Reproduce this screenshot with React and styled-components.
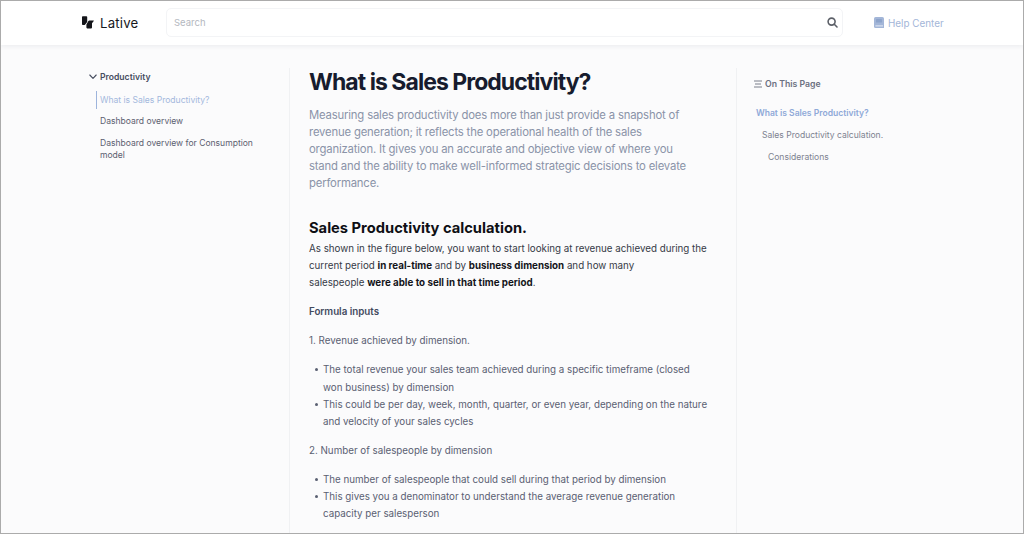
import React from 'react';
import styled, { createGlobalStyle } from 'styled-components';

const GlobalStyle = createGlobalStyle`
  html, body { margin: 0; padding: 0; height: 100%; }
  body { background: #fbfbfc; font-family: Inter, "Noto Sans", sans-serif; overflow: hidden; }
  * { box-sizing: border-box; }
`;

const Frame = styled.div`
  width: 1024px;
  height: 534px;
  border: 1px solid #ababab;
  overflow: hidden;
  background: #fbfbfc;
`;

const Header = styled.header`
  height: 44px;
  background: #fff;
  box-shadow: 0 1px 5px rgba(30, 40, 60, 0.08);
  display: flex;
  align-items: center;
  padding: 0 0 1px 80px;
`;

const Brand = styled.div`
  width: 85px;
  display: flex;
  align-items: center;
  gap: 6px;
  font-size: 13.2px;
  color: #16181d;
  letter-spacing: 0.2px;
`;

const SearchBox = styled.div`
  width: 677px;
  height: 29px;
  border: 1px solid #f3f4f6;
  border-radius: 5px;
  display: flex;
  align-items: center;
  justify-content: space-between;
  padding: 0 4px 0 7px;
  font-size: 9.5px;
  color: #b4b8c0;
`;

const HelpLink = styled.div`
  margin-left: 31px;
  display: flex;
  align-items: center;
  gap: 4px;
  font-size: 9.9px;
  color: #a3b6d8;
`;

const Body = styled.div`
  display: flex;
  padding: 23px 0 0 88px;
`;

const Sidebar = styled.nav`
  width: 200px;
  padding-top: 3px;
`;

const NavHead = styled.div`
  display: flex;
  align-items: center;
  gap: 3px;
  font-size: 8.6px;
  font-weight: 600;
  color: #474d5f;
  height: 12px;
`;

const NavList = styled.div`
  margin: 8px 0 0 7px;
  display: flex;
  flex-direction: column;
  gap: 4px;
`;

const NavItem = styled.div`
  padding: 2.5px 0 2.5px 3px;
  width: 170px;
  border-left: 1.5px solid ${p => (p.$active ? '#9db4dc' : 'transparent')};
  font-size: 8.55px;
  line-height: 12.5px;
  color: ${p => (p.$active ? '#a3b8dc' : '#5b6070')};
`;

const Main = styled.main`
  width: 448px;
  border-left: 1px solid #f0f1f3;
  border-right: 1px solid #f0f1f3;
  padding: 0 20px 0 19px;
  height: 470px;
`;

const Title = styled.h1`
  margin: 0;
  font-size: 23px;
  font-weight: 700;
  line-height: 29px;
  letter-spacing: -0.95px;
  color: #171c2e;
`;

const Lead = styled.p`
  margin: 10px 0 0;
  font-size: 11.3px;
  line-height: 17px;
  letter-spacing: -0.17px;
  color: #8a93a8;
`;

const SectionTitle = styled.h2`
  margin: 26px 0 0;
  font-size: 14.7px;
  font-weight: 700;
  line-height: 20px;
  color: #0e0f14;
`;

const Para = styled.p`
  margin: 2px 0 0;
  font-size: 9.78px;
  line-height: 17.1px;
  color: #363a46;
  strong { color: #14151a; font-weight: 700; }
`;

const SubHead = styled.p`
  margin: 12px 0 0;
  font-size: 9.78px;
  line-height: 17.1px;
  font-weight: 600;
  color: #434a5e;
`;

const Step = styled.p`
  margin: 12px 0 0;
  font-size: 9.78px;
  line-height: 17.1px;
  color: #5a6072;
`;

const Bullets = styled.ul`
  margin: 12px 0 0;
  padding: 0 0 0 14px;
  list-style: none;
  font-size: 9.78px;
  line-height: 17.1px;
  color: #5a6072;
`;

const Bullet = styled.li`
  position: relative;
  &::before {
    content: '';
    position: absolute;
    left: -8px;
    top: 7px;
    width: 3px;
    height: 3px;
    border-radius: 50%;
    background: #5a6072;
  }
`;

const Toc = styled.aside`
  padding: 9px 0 0 17px;
`;

const TocHead = styled.div`
  display: flex;
  align-items: center;
  gap: 3px;
  font-size: 8.7px;
  font-weight: 600;
  color: #6b7080;
  height: 14px;
`;

const TocLink = styled.div`
  margin: ${p => (p.$first ? '17px' : '11px')} 0 0 ${p => p.$indent * 6 + 2}px;
  font-size: 8.55px;
  line-height: 11px;
  font-weight: ${p => (p.$active ? 600 : 400)};
  color: ${p => (p.$active ? '#8fa9d8' : '#7d8290')};
`;

const LogoMark = () => (
  <svg width="13" height="13" viewBox="0 0 13 13">
    <path d="M1 1 Q1 .2 1.8 .2 H5.4 Q6.2 .2 6.2 1 V6 L4.2 8.4 Q3.8 9 3 9 H1.8 Q1 9 1 8.2 Z" fill="#14151a" />
    <path d="M7.4 5 Q7.7 4.4 8.4 4.4 H12.6 Q13 4.4 12.8 4.9 L11 7.2 V11.4 Q11 12.4 10 12.4 H6.2 Q5.4 12.4 5.4 11.6 V8.6 Z" fill="#14151a" />
  </svg>
);

const SearchIcon = () => (
  <svg width="11" height="11" viewBox="0 0 11 11" fill="none" stroke="#5c6068" strokeWidth="1.6" strokeLinecap="round">
    <circle cx="4.6" cy="4.6" r="3.5" />
    <path d="M7.3 7.3 L10 10" />
  </svg>
);

const BookIcon = () => (
  <svg width="10" height="11" viewBox="0 0 10 11">
    <path d="M1.6 0 H8.4 Q10 0 10 1.6 V11 H1.6 Q0 11 0 9.4 V1.6 Q0 0 1.6 0 Z" fill="#a3b6d8" />
    <rect x="2" y="2" width="6" height="3.6" rx="0.4" fill="#8da4cb" />
    <rect x="1.4" y="8.4" width="7.6" height="1" fill="#e4eaf5" />
  </svg>
);

const Chevron = () => (
  <svg width="8" height="6" viewBox="0 0 8 6" fill="none" stroke="#474d5f" strokeWidth="1.1" strokeLinecap="round" strokeLinejoin="round">
    <path d="M.8 1 L4 4.4 L7.2 1" />
  </svg>
);

const ListIcon = () => (
  <svg width="8" height="8" viewBox="0 0 8 8" fill="none" stroke="#6b7080" strokeWidth="0.9">
    <path d="M0 1 H8 M1 4 H7 M0 7 H8" />
  </svg>
);

export default function App() {
  return (
    <Frame>
      <GlobalStyle />
      <Header>
        <Brand><LogoMark />Lative</Brand>
        <SearchBox>Search<SearchIcon /></SearchBox>
        <HelpLink><BookIcon />Help Center</HelpLink>
      </Header>
      <Body>
        <Sidebar>
          <NavHead><Chevron />Productivity</NavHead>
          <NavList>
            <NavItem $active>What is Sales Productivity?</NavItem>
            <NavItem>Dashboard overview</NavItem>
            <NavItem>Dashboard overview for Consumption model</NavItem>
          </NavList>
        </Sidebar>
        <Main>
          <Title>What is Sales Productivity?</Title>
          <Lead>
            Measuring sales productivity does more than just provide a snapshot of<br />
            revenue generation; it reflects the operational health of the sales<br />
            organization. It gives you an accurate and objective view of where you<br />
            stand and the ability to make well-informed strategic decisions to elevate<br />
            performance.
          </Lead>
          <SectionTitle>Sales Productivity calculation.</SectionTitle>
          <Para>
            As shown in the figure below, you want to start looking at revenue achieved during the<br />
            current period <strong>in real-time</strong> and by <strong>business dimension</strong> and how many<br />
            salespeople <strong>were able to sell in that time period</strong>.
          </Para>
          <SubHead>Formula inputs</SubHead>
          <Step>1. Revenue achieved by dimension.</Step>
          <Bullets>
            <Bullet>The total revenue your sales team achieved during a specific timeframe (closed<br />won business) by dimension</Bullet>
            <Bullet>This could be per day, week, month, quarter, or even year, depending on the nature<br />and velocity of your sales cycles</Bullet>
          </Bullets>
          <Step>2. Number of salespeople by dimension</Step>
          <Bullets>
            <Bullet>The number of salespeople that could sell during that period by dimension</Bullet>
            <Bullet>This gives you a denominator to understand the average revenue generation<br />capacity per salesperson</Bullet>
          </Bullets>
        </Main>
        <Toc>
          <TocHead><ListIcon />On This Page</TocHead>
          <TocLink $first $active $indent={0}>What is Sales Productivity?</TocLink>
          <TocLink $indent={1}>Sales Productivity calculation.</TocLink>
          <TocLink $indent={2}>Considerations</TocLink>
        </Toc>
      </Body>
    </Frame>
  );
}
